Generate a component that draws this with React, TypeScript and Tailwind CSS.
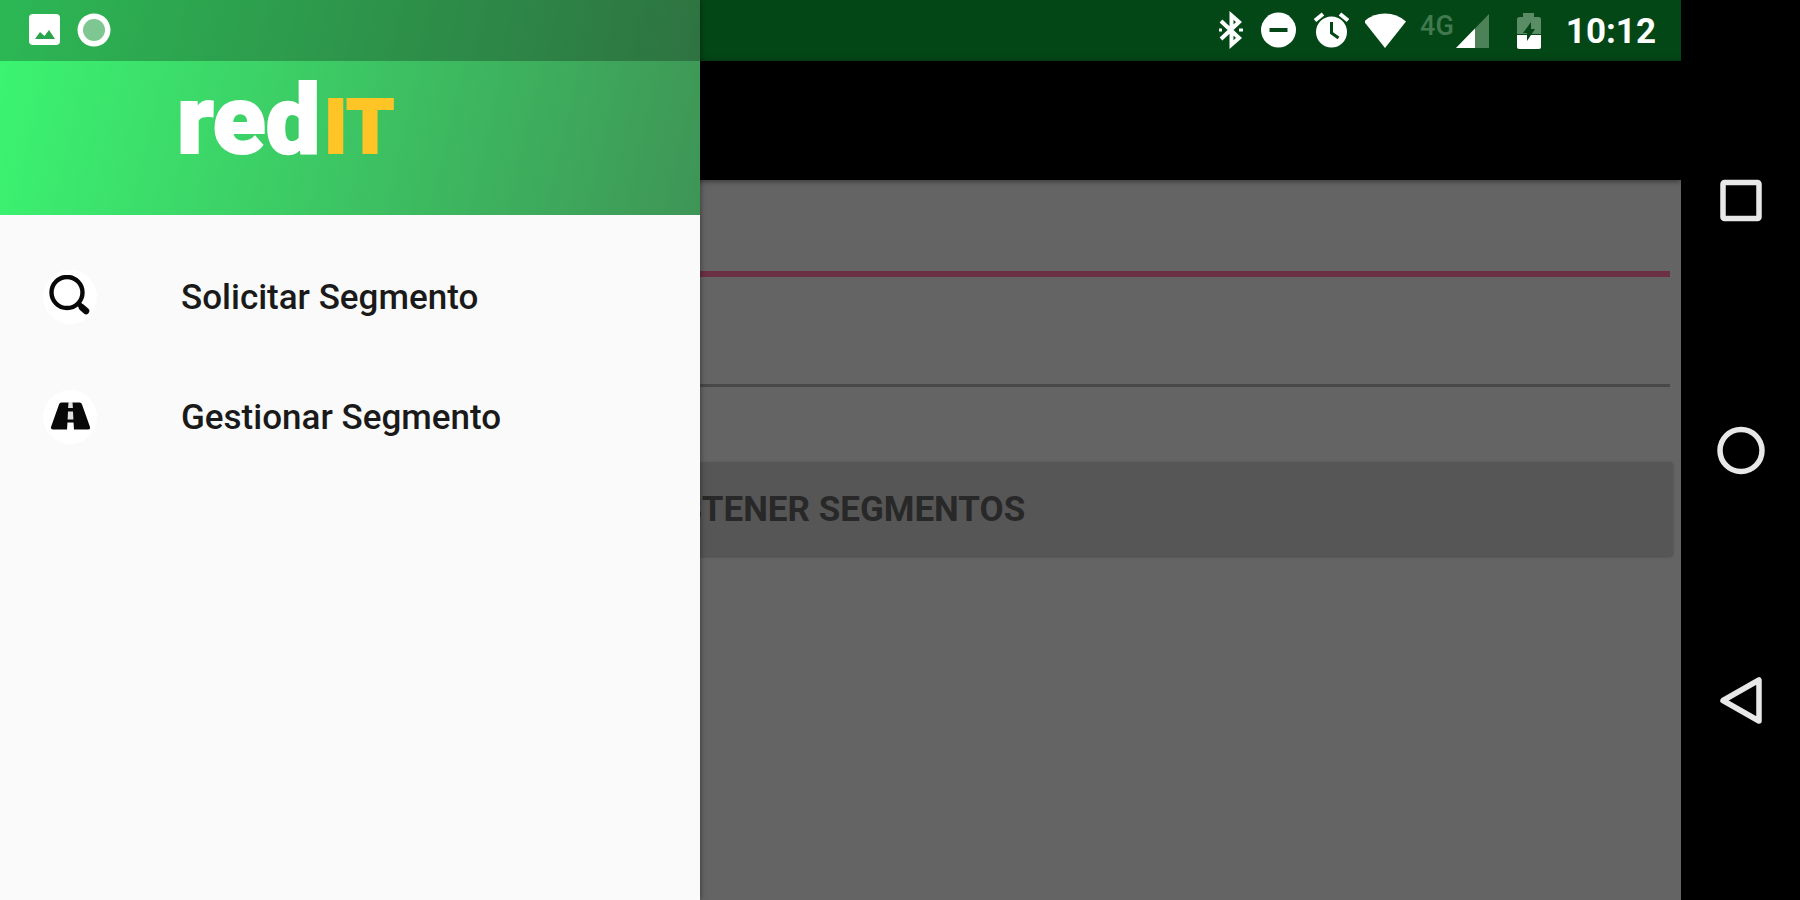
import type { ReactNode } from 'react'

interface DrawerItemProps {
  label: string
  icon: ReactNode
}

function DrawerItem({ label, icon }: DrawerItemProps) {
  return (
    <li>
      <a href="#" className="flex h-[120px] items-center pl-[43px]">
        <span className="flex size-[54px] items-center justify-center rounded-full bg-white">
          {icon}
        </span>
        <span className="pt-0.5 pl-[84px] text-[35px] leading-10 font-medium text-[#1a1a1a]">
          {label}
        </span>
      </a>
    </li>
  )
}

function SearchIcon() {
  return (
    <svg width="44" height="44" viewBox="0 0 44 44" fill="none" stroke="#080808">
      <circle cx="19" cy="17.500" r="15.500" strokeWidth="4.400" />
      <path d="M30 28l4 4" strokeWidth="5" />
      <path d="M34 32.500l4 3.500" strokeWidth="6.500" strokeLinecap="round" />
    </svg>
  )
}

function RoadIcon() {
  return (
    <svg width="40" height="30" viewBox="0 0 40 30">
      <path
        d="M11.500 0.500H29.500Q31.500 0.500 32 2.500L40 25Q40.500 27.500 38 27.500H3Q0.500 27.500 1 25L9 2.500Q9.500 0.500 11.500 0.500Z"
        fill="#080808"
      />
      <path d="M18.500 0h4l.4 6h-4.800zM18 9.500h5l.4 8h-5.800z" fill="#e0e0e0" />
      <path d="M17.500 20.500h6l.5 7.500h-7z" fill="#fff" />
    </svg>
  )
}

function StatusIcons() {
  return (
    <div className="flex items-center gap-[13px] pb-px text-white">
      <svg width="30" height="40" viewBox="0 0 30 40" fill="none" stroke="currentColor">
        <path d="M5 11L23 28L15.500 34.500V5.500L23 12L5 29" strokeWidth="4" />
        <path d="M3 20h3M23 20h4" strokeWidth="3" />
      </svg>
      <svg width="40" height="40" viewBox="0 0 40 40">
        <circle cx="19.500" cy="20" r="17.500" fill="currentColor" />
        <path d="M10.500 20h18" stroke="#044716" strokeWidth="4" />
      </svg>
      <svg width="40" height="40" viewBox="0 0 40 40" fill="none">
        <circle cx="19.500" cy="22" r="15.500" fill="currentColor" />
        <path d="M3 10.500l8-6.500M36 10.500l-8-6.500" stroke="currentColor" strokeWidth="4" />
        <path d="M19.500 12v11l7 5" stroke="#044716" strokeWidth="3" />
      </svg>
      <svg width="42" height="40" viewBox="0 0 42 40" fill="currentColor">
        <path d="M-1 11.500Q8 3.500 20 3.500T41 11.500L20 38Z" />
      </svg>
      <div className="flex items-center">
        <span className="pb-2 text-[27px] leading-7 font-medium text-[#417a4f]">4G</span>
        <svg width="36" height="40" viewBox="0 0 36 40">
          <path d="M35 4V38H2Z" fill="#4d8259" />
          <path d="M21 18.500V38H2Z" fill="currentColor" />
        </svg>
      </div>
      <svg className="ml-3" width="26" height="40" viewBox="0 0 26 40">
        <path d="M8 3h11v4h4q3 0 3 2v15H2V9q0-2 3-2h3z" fill="#5a8c65" />
        <path d="M2 25h24v12q0 2-2 2H4q-2 0-2-2z" fill="currentColor" />
        <path d="M16 12v7h4L12 31v-8H8z" fill="#044716" />
      </svg>
      <span className="pt-1 pl-3 text-[35px] leading-10 font-bold">10:12</span>
    </div>
  )
}

function Drawer() {
  return (
    <aside className="absolute inset-y-0 left-0 w-[700px] bg-[#fafafa] shadow-[0_0_6px_#00000080]">
      <header className="h-[215px] bg-linear-[103deg,#3bf671,#3e9556]">
        <div className="flex h-[61px] items-center gap-4 bg-black/25 pl-[29px] pb-px text-white">
          <svg width="32" height="32" viewBox="0 0 32 32">
            <rect width="31" height="31" rx="4" fill="currentColor" />
            <path d="M6 25l5-7 4.500 4 4.500-6 6 9z" fill="#29a34c" />
          </svg>
          <svg width="34" height="34" viewBox="0 0 34 34">
            <circle cx="17" cy="17" r="16.500" fill="currentColor" />
            <circle cx="17" cy="17" r="11" fill="#7fc792" />
          </svg>
        </div>
        <h1 className="flex items-baseline pl-[177px] leading-[118px] font-black">
          <span className="text-[97px] text-white [-webkit-text-stroke:2px_white]">red</span>
          <span className="pl-1 text-[76px] text-[#ffc425] [-webkit-text-stroke:2px_#ffc425]">IT</span>
        </h1>
      </header>
      <nav className="pt-[22px]">
        <ul>
          <DrawerItem label="Solicitar Segmento" icon={<SearchIcon />} />
          <DrawerItem label="Gestionar Segmento" icon={<RoadIcon />} />
        </ul>
      </nav>
    </aside>
  )
}

function SystemNav() {
  const button = 'flex flex-1 items-center justify-center'
  return (
    <nav className="flex w-[119px] shrink-0 flex-col bg-black py-[75px] text-[#e8e8e8]">
      <button aria-label="Recientes" className={button}>
        <svg width="50" height="50" viewBox="0 0 50 50" fill="none" stroke="currentColor">
          <rect x="7" y="7.500" width="36" height="36" rx="1.500" strokeWidth="5.500" />
        </svg>
      </button>
      <button aria-label="Inicio" className={button}>
        <svg width="50" height="50" viewBox="0 0 50 50" fill="none" stroke="currentColor">
          <circle cx="25" cy="25.500" r="21" strokeWidth="5.500" />
        </svg>
      </button>
      <button aria-label="Atrás" className={button}>
        <svg width="50" height="50" viewBox="0 0 50 50" fill="none" stroke="currentColor">
          <path d="M43 5V46L7 25.500Z" strokeWidth="5.500" strokeLinejoin="round" />
        </svg>
      </button>
    </nav>
  )
}

export default function App() {
  return (
    <div className="flex min-h-screen bg-black font-[Roboto,sans-serif]">
      <main className="relative flex flex-1 flex-col overflow-hidden bg-[#646464]">
        <div className="flex h-[61px] items-center justify-end bg-[#044716] pr-[25px]">
          <StatusIcons />
        </div>
        <div className="h-[119px] bg-black shadow-[0_1px_6px_#00000080]" />
        <form className="flex flex-col px-2">
          <input
            aria-label="Segmento"
            className="mx-[3px] h-[97px] border-b-6 border-[#6b3044] outline-none"
          />
          <input
            aria-label="Zona"
            className="mx-[3px] h-[110px] border-b-3 border-[#484848] outline-none"
          />
          <button
            type="button"
            className="mt-[75px] h-[94px] rounded-[4px] bg-[#565656] pt-0.5 text-[35px] font-bold text-[#282828] shadow-[0_1px_3px_#00000040]"
          >
            OBTENER SEGMENTOS
          </button>
        </form>
        <Drawer />
      </main>
      <SystemNav />
    </div>
  )
}
